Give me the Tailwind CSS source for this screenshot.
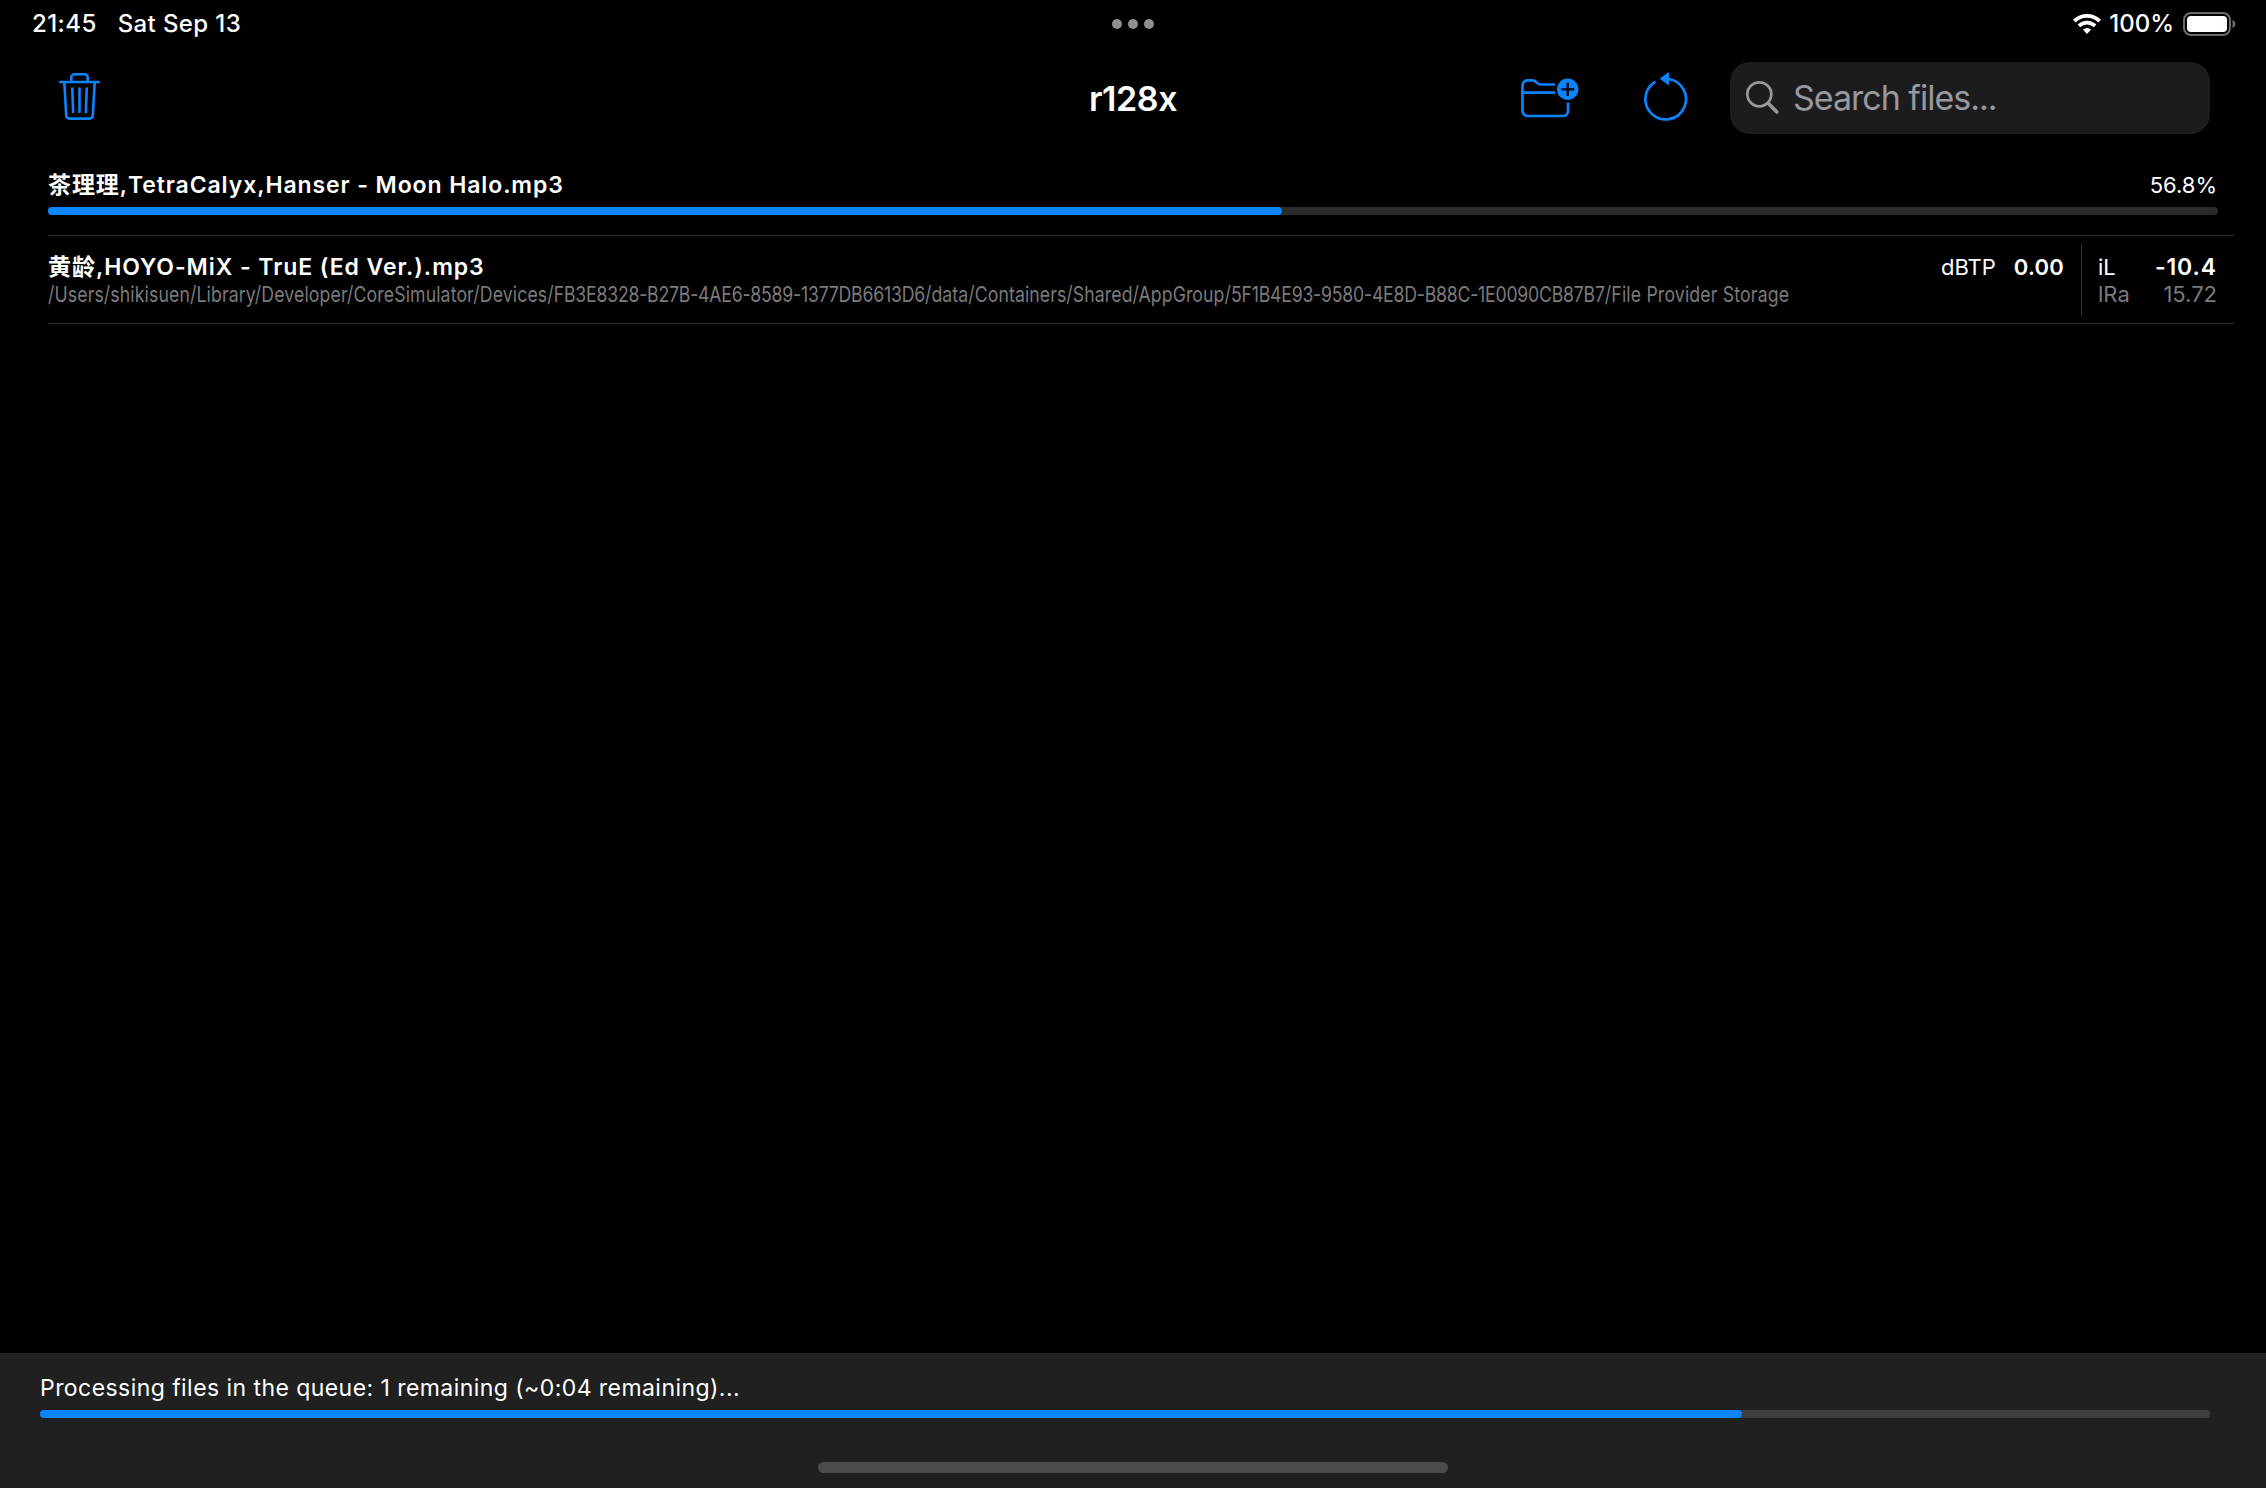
<!DOCTYPE html>
<html lang="en">
<head>
<meta charset="utf-8">
<title>r128x</title>
<script src="https://cdn.jsdelivr.net/npm/@tailwindcss/browser@4"></script>
</head>
<body class="bg-black">
<div class="flex h-[1488px] w-[2266px] flex-col overflow-hidden bg-black font-['Inter','Noto_Sans_CJK_SC',sans-serif] text-white">
  <header class="grid h-12 grid-cols-3 items-center px-[30px] text-[24px] leading-none font-medium">
    <div class="flex gap-[21px] pl-0.5 tracking-[0.4px]"><span>21:45</span><span>Sat Sep 13</span></div>
    <div class="flex justify-center gap-1.5">
      <i class="size-2.5 rounded-full bg-[#8e8e8e]"></i><i class="size-2.5 rounded-full bg-[#8e8e8e]"></i><i class="size-2.5 rounded-full bg-[#8e8e8e]"></i>
    </div>
    <div class="flex items-center justify-end">
      <svg class="mr-2 h-5 w-7" viewBox="0 0 28 20" fill="none" stroke="#fff" stroke-width="3.6"><path d="M1.3 7.1a18 18 0 0 1 25.4 0M5.9 11.9a11.6 11.6 0 0 1 16.2 0"/><path d="M9.9 15.6a6 6 0 0 1 8.2 0L14 19.9Z" fill="#fff" stroke="none"/></svg>
      <span>100%</span>
      <svg class="ml-[9px] h-6 w-[53px]" viewBox="0 0 53 24"><rect x="1" y="1" width="46" height="22" rx="7" fill="none" stroke="#6b6b6b" stroke-width="2"/><rect x="4" y="4" width="40" height="16" rx="4" fill="#fff"/><path d="M49.500 8c4 1.200 4 6.800 0 8Z" fill="#6b6b6b"/></svg>
    </div>
  </header>
  <nav class="grid h-[100px] grid-cols-3 items-center pr-[57px] pl-[57px]">
    <svg class="mb-[5px] ml-px h-[50px] w-11" viewBox="0 0 44 50" fill="none" stroke="#0a84ff" stroke-width="2.6" stroke-linecap="round" stroke-linejoin="round"><path d="M2.300 11H40.700M13.300 11V6.500a3.300 3.300 0 0 1 3.300-3.300h9.800a3.300 3.300 0 0 1 3.300 3.300V11M6.300 11l1.900 33.300a3.500 3.500 0 0 0 3.500 3.300h19.600a3.500 3.500 0 0 0 3.500-3.300L36.700 11M14.300 17.500l.8 23.500M21.500 17.500V41M28.700 17.500l-.8 23.500"/></svg>
    <h1 class="pt-px text-center text-[34px] leading-none font-semibold tracking-[-0.4px]">r128x</h1>
    <div class="flex items-center justify-end">
      <svg class="mr-[62px] mb-[5px] h-12 w-[60px]" viewBox="0 0 60 48" fill="none" stroke="#0a84ff" stroke-width="2.700"><path d="M35 12.500H20.500c-1.500 0-2.200-.5-3.200-1.400l-1.600-1.400c-1-.9-1.800-1.300-3.300-1.300H7.500a5 5 0 0 0-5 5V39a5 5 0 0 0 5 5H43a5 5 0 0 0 5-5V30.500M2.500 20.700H35"/><circle cx="47.700" cy="17.300" r="10.700" fill="#0a84ff" stroke="none"/><path d="M47.700 10.700v13.200M41.100 17.300h13.200" stroke="#000" stroke-width="2.300"/></svg>
      <svg class="mr-[42px] mb-[3px] h-[52px] w-[46px]" viewBox="0 0 46 52" fill="none" stroke="#0a84ff" stroke-width="2.700" stroke-linecap="round"><path d="M12.300 11.300A20.300 20.300 0 1 0 26.500 8"/><path d="M18.500 7.500L26.500 1.800V13.500Z" fill="#0a84ff" stroke-width="1"/></svg>
      <div class="-mr-px flex h-[72px] w-[480px] items-center rounded-[20px] bg-[#1c1c1e] pl-4 text-[34px] leading-none text-[#98989f]">
        <svg class="mr-[11px] size-9" viewBox="0 0 36 36" fill="none" stroke="#98989f" stroke-width="2.700" stroke-linecap="round"><circle cx="13.300" cy="14.300" r="12"/><path d="M22.500 23.500l8.300 8.500" stroke-width="3.600"/></svg>
        <span class="tracking-[-1px]">Search files...</span>
      </div>
    </div>
  </nav>
  <main class="flex-1 pr-8 pl-12">
    <section class="h-[88px] border-b border-[#303032] pt-[25px]">
      <div class="flex h-6 items-center justify-between pr-[17px] text-[22px] leading-none"><b class="text-[23px] font-semibold tracking-[0.9px]">茶理理,TetraCalyx,Hanser - Moon Halo.mp3</b><span class="-mt-px">56.8%</span></div>
      <div class="mt-2.5 mr-4 h-2 rounded-full bg-[#2b2b2d]"><div class="h-2 rounded-full bg-[#0a84ff]" style="width:56.87%"></div></div>
    </section>
    <section class="flex h-[88px] border-b border-[#303032] pr-4 text-[22px] leading-none">
      <div class="flex-1 pt-[19px]">
        <div class="flex h-6 items-center justify-between pr-[17px]"><b class="text-[23px] font-semibold tracking-[0.94px]">黄龄,HOYO-MiX - TruE (Ed Ver.).mp3</b><div class="flex gap-[18px]"><span>dBTP</span><b class="font-semibold tracking-[0.2px]">0.00</b></div></div>
        <p class="mt-1 w-0 origin-left scale-x-[0.8025] whitespace-nowrap text-[#7a7a7c]"><span class="tracking-[0.16px]">/Users/shikisuen/Library/Developer/CoreSimulator/Devices/</span><span class="tracking-[-0.25px]">FB3E8328-B27B-4AE6-8589-1377DB6613D6</span><span class="tracking-[0.12px]">/data/Containers/Shared/AppGroup/</span><span class="tracking-[-0.25px]">5F1B4E93-9580-4E8D-B88C-1E0090CB87B7</span><span class="tracking-[0.22px]">/File Provider Storage</span></p>
      </div>
      <dl class="mt-2 flex h-[72px] w-[137px] flex-col border-l border-[#303032] pt-[11px] pr-px pl-4">
        <div class="flex h-6 items-center justify-between"><dt>iL</dt><dd class="text-[23px] font-semibold tracking-[0.9px]">-10.4</dd></div>
        <div class="mt-[3px] flex h-6 items-center justify-between text-[#7a7a7c]"><dt>lRa</dt><dd>15.72</dd></div>
      </dl>
    </section>
  </main>
  <footer class="h-[135px] bg-[#202020] pt-[21px] pr-14 pl-10">
    <p class="h-7 text-[23px] leading-7 tracking-[0.44px]">Processing files in the queue: 1 remaining (~0:04 remaining)...</p>
    <div class="mt-2 h-2 rounded-full bg-[#3f3f41]"><div class="h-2 rounded-full bg-[#0a84ff]" style="width:78.43%"></div></div>
    <div class="mt-11 ml-[778px] h-[11px] w-[630px] rounded-full bg-[#4b4b4b]"></div>
  </footer>
</div>
</body>
</html>
